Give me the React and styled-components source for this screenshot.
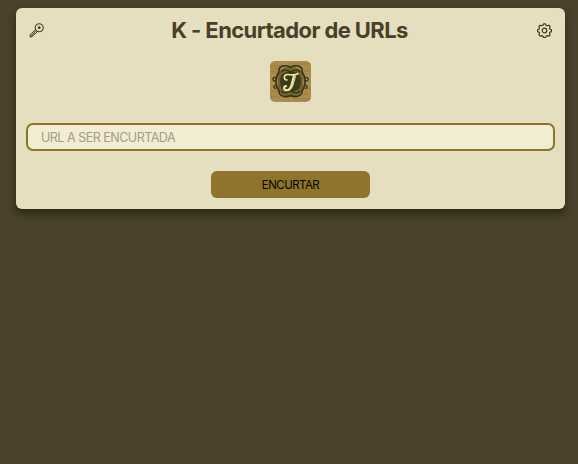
import React from "react";
import styled, { createGlobalStyle } from "styled-components";

const GlobalStyle = createGlobalStyle`
  * { box-sizing: border-box; }
  body {
    margin: 0;
    background: #4a422b;
    font-family: Inter, "Liberation Sans", sans-serif;
  }
`;

const Page = styled.main`
  min-height: 100vh;
  padding: 8px 13px 0 16px;
`;

const Card = styled.section`
  display: flex;
  flex-direction: column;
  align-items: center;
  height: 201px;
  padding: 7px 10px 11px;
  border-radius: 6px;
  background: #e5debf;
  box-shadow: 0 5px 9px rgba(22, 20, 8, 0.6);
`;

const Header = styled.header`
  display: flex;
  align-items: center;
  justify-content: space-between;
  width: 100%;
  height: 30px;
  padding: 0 3px;
`;

const Title = styled.h1`
  margin: 0 2px 0 0;
  color: #4a4027;
  font-size: 22px;
  font-weight: 700;
  line-height: 30px;
  letter-spacing: -0.59px;
  white-space: nowrap;
`;

const IconButton = styled.button`
  display: flex;
  width: 15px;
  height: 15px;
  padding: 0;
  border: 0;
  background: none;
  color: #40371f;
  svg { display: block; width: 100%; height: 100%; }
`;

const Logo = styled.svg`
  flex: none;
  width: 41px;
  height: 41px;
  margin-top: 16px;
  border-radius: 5px;
`;

const UrlInput = styled.input`
  flex: none;
  width: 100%;
  height: 28px;
  margin-top: 21px;
  padding: 0 13px;
  border: 2px solid #8d742a;
  border-radius: 7px;
  outline: none;
  background: #f2ecd3;
  color: #4a4027;
  font: 400 12.5px Inter, "Liberation Sans", sans-serif;
  letter-spacing: -0.49px;
  &::placeholder { color: #a29b89; opacity: 1; }
`;

const SubmitButton = styled.button`
  flex: none;
  width: 158.4px;
  height: 27.4px;
  margin-top: 19.8px;
  padding: 1px 0 0;
  border: 0;
  border-radius: 6px;
  background: #8e742d;
  color: #080600;
  font: 400 11.5px Inter, "Liberation Sans", sans-serif;
  letter-spacing: -0.53px;
`;

function KeyIcon() {
  return (
    <svg viewBox="0 0 15 15" fill="none" stroke="currentColor" strokeLinecap="round" strokeLinejoin="round">
      <circle cx="10.2" cy="4.7" r="4" strokeWidth="1.1" />
      <circle cx="10.2" cy="4.7" r="1.35" fill="currentColor" stroke="none" />
      <path d="M6.6 6.5 1 11.9v2h2.1l.5-1.5 1.4-.2.3-1.5 1.5-.2 1.6-2.3M2 12.8 6.8 8" strokeWidth="0.95" />
    </svg>
  );
}

function GearIcon() {
  return (
    <svg viewBox="0 0 15 15" fill="none" stroke="currentColor" strokeWidth="1.2" strokeLinejoin="round">
      <path d="M5.8 2.4 6.5.9h2l.7 1.5 1 .4 1.6-.6 1.3 1.3-.6 1.6.4 1 1.6.7v1.8l-1.6.7-.4 1 .6 1.6-1.3 1.3-1.6-.6-1 .4-.7 1.5h-2l-.7-1.5-1-.4-1.6.6-1.3-1.3.6-1.6-.4-1-1.6-.7V6.8l1.6-.7.4-1-.6-1.6 1.3-1.3 1.6.6Z" />
      <circle cx="7.5" cy="7.5" r="2.3" />
    </svg>
  );
}

function Emblem() {
  return (
    <Logo viewBox="0 0 41 41" aria-label="J">
      <rect width="41" height="41" fill="#ab8d4c" />
      <g stroke="#8a6e38" strokeWidth="0.7" opacity="0.7">
        <path d="M0 5h15M19 3h22M0 11h8M32 10h9M0 30h7M34 28h7M0 36h19M24 38h17M3 8h9M30 33h9" />
      </g>
      <path d="M12 8Q20 3 29 8Q35 13 33 21Q35 29 28 34Q20 38 13 34Q6 29 8 21Q6 13 12 8Z" fill="#71642f" />
      <path d="M12 13Q21 8 29 13Q33 20 29 28Q20 33 12 28Q8 20 12 13Z" fill="#3a3a1f" />
      <g fill="none" stroke="#33321a" strokeWidth="1.6">
        <path d="M20.5 6C13 3 8 6 9 11c-4 5-4 14 0 19 0 5 6 7 11.5 4.5C26 37 32 35 32 30c4-5 4-14 0-19 1-5-4-8-11.5-5Z" />
        <path d="M7 18c-2-3-5-1-4 1 1 2 3 1 3 0M34 18c2-3 5-1 4 1-1 2-3 1-3 0M7 24c-4 0-4 4-1 3M34 24c4 0 4 4 1 3" strokeWidth="1.2" />
        <path d="M11 11c3-4 7-1 9.5 0 2.5-1 6.5-4 9.5 0M11 30c3 4 7 1 9.5 0 2.5 1 6.5 4 9.5 0" strokeWidth="1.3" />
      </g>
      <g fill="none" stroke="#f2e998" strokeLinecap="round" strokeLinejoin="round">
        <path d="M17 19c-4 0-3.5-5.5.5-5.5 4 0 6 1.5 10.5-.8" strokeWidth="1.6" />
        <path d="M24 14.5 21.5 24c-1 4.5-4 6-6.5 4.7-2-1.2-.6-4 1.1-3.5" strokeWidth="2.1" />
        <path d="M25.5 15.5 23 24c-.7 2.800-2.2 4.5-4 5.5" strokeWidth="1" />
      </g>
    </Logo>
  );
}

export default function App() {
  return (
    <>
      <GlobalStyle />
      <Page>
        <Card>
          <Header>
            <IconButton aria-label="Chave"><KeyIcon /></IconButton>
            <Title>K - Encurtador de URLs</Title>
            <IconButton aria-label="Configurações"><GearIcon /></IconButton>
          </Header>
          <Emblem />
          <UrlInput placeholder="URL A SER ENCURTADA" />
          <SubmitButton>ENCURTAR</SubmitButton>
        </Card>
      </Page>
    </>
  );
}
